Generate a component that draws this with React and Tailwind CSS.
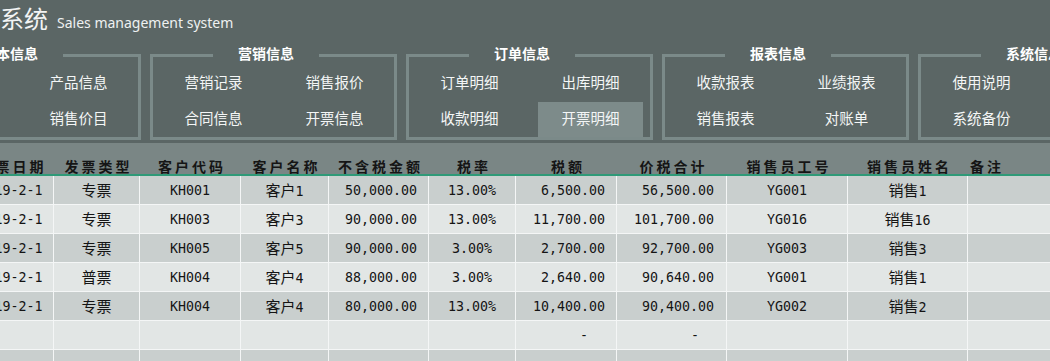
import React from "react";

const groups = [
  { title: "基本信息", items: ["客户信息", "产品信息", "员工信息", "销售价目"] },
  { title: "营销信息", items: ["营销记录", "销售报价", "合同信息", "开票信息"] },
  { title: "订单信息", items: ["订单明细", "出库明细", "收款明细", "开票明细"], active: 3 },
  { title: "报表信息", items: ["收款报表", "业绩报表", "销售报表", "对账单"] },
  { title: "系统信息", items: ["使用说明", "修改密码", "系统备份", "数据恢复"] },
];

const headers = [
  "开票日期", "发票类型", "客户代码", "客户名称", "不含税金额", "税率", "税额", "价税合计", "销售员工号", "销售员姓名", "备注",
];

const rows = [
  ["2019-2-1", "专票", "KH001", "客户1", "50,000.00", "13.00%", "6,500.00", "56,500.00", "YG001", "销售1", ""],
  ["2019-2-1", "专票", "KH003", "客户3", "90,000.00", "13.00%", "11,700.00", "101,700.00", "YG016", "销售16", ""],
  ["2019-2-1", "专票", "KH005", "客户5", "90,000.00", "3.00%", "2,700.00", "92,700.00", "YG003", "销售3", ""],
  ["2019-2-1", "普票", "KH004", "客户4", "88,000.00", "3.00%", "2,640.00", "90,640.00", "YG001", "销售1", ""],
  ["2019-2-1", "专票", "KH004", "客户4", "80,000.00", "13.00%", "10,400.00", "90,400.00", "YG002", "销售2", ""],
  ["", "", "", "", "", "", "-", "-", "", "", ""],
  ["", "", "", "", "", "", "", "", "", "", ""],
];

const cellAlign = [
  "justify-center",
  "justify-center",
  "justify-center",
  "justify-center",
  "justify-end pr-[11px]",
  "justify-center",
  "justify-end pr-[11px]",
  "justify-end pr-[12px]",
  "justify-center",
  "justify-center",
  "justify-start pl-[4px]",
];

const dashAlign = {
  6: "justify-end pr-[28px]",
  7: "justify-end pr-[27px]",
};

const gridCols =
  "grid grid-cols-[86px_86px_101px_88px_100px_87px_101px_110px_121px_120px_200px]";

function Mixed({ text }) {
  const parts = [];
  let buf = "";
  let cjk = null;
  for (const ch of text) {
    const isCjk = /[\u4e00-\u9fff]/.test(ch);
    if (cjk === null) cjk = isCjk;
    if (isCjk !== cjk) {
      parts.push({ t: buf, cjk });
      buf = "";
      cjk = isCjk;
    }
    buf += ch;
  }
  if (buf) parts.push({ t: buf, cjk });
  return (
    <span className="whitespace-nowrap">
      {parts.map((p, i) =>
        p.cjk ? (
          <span key={i} className="text-[15px] font-['Noto_Sans_CJK_SC',sans-serif]">
            {p.t}
          </span>
        ) : (
          <span key={i}>{p.t}</span>
        )
      )}
    </span>
  );
}

function Group({ g }) {
  return (
    <fieldset className="w-[247px] shrink-0 border-[3px] border-[#7b8a89] m-0 p-0 min-w-0">
      <legend className="ml-[60px] p-0 text-left">
        <div className="w-[106px] text-center text-[14px] leading-[20px] pb-[4px] font-bold text-white whitespace-nowrap">
          {g.title}
        </div>
      </legend>
      <div className="grid grid-cols-[105px_105px] gap-x-[16px] gap-y-[1px] pl-[8px] mt-[-1px]">
        {g.items.map((it, i) => (
          <div
            key={i}
            className={`h-[35px] flex items-center justify-center pb-[3px] text-[14.5px] text-[#f4f6f6] whitespace-nowrap ${
              g.active === i ? "bg-[#7d8b8a]" : ""
            }`}
          >
            {it}
          </div>
        ))}
      </div>
    </fieldset>
  );
}

export default function App() {
  return (
    <div className="w-[1050px] h-[361px] overflow-hidden bg-[#5b6665] font-['Noto_Sans_CJK_SC','Noto_Sans',sans-serif]">
      {/* title bar */}
      <div className="h-[43px] flex items-baseline pt-[2px] whitespace-nowrap">
        <span className="ml-[-96px] text-[24px] leading-[32px] text-[#f2f4f4]">销售管理系统</span>
        <span className="ml-[9px] text-[14px] text-[#eef1f1] font-['Noto_Sans','Noto_Sans_CJK_SC',sans-serif]">
          Sales management system
        </span>
      </div>

      {/* groups */}
      <div className="flex gap-[9px] ml-[-106px]">
        {groups.map((g, i) => (
          <Group key={i} g={g} />
        ))}
      </div>

      {/* table header */}
      <div className="mt-[3px] h-[33px] bg-[#7a8685] border-b-2 border-[#2f9a78] overflow-hidden">
        <div className={`${gridCols} ml-[-32px] h-[31px]`}>
          {headers.map((h, i) => (
            <div
              key={i}
              className={`flex items-end pb-[1px] text-[14px] leading-[14px] font-bold tracking-[3px] text-[#151515] whitespace-nowrap ${
                i === 10 ? "justify-start pl-[2px]" : "justify-center pl-[3px]"
              }`}
            >
              {h}
            </div>
          ))}
        </div>
      </div>

      {/* table rows */}
      <div className="overflow-hidden">
        <div className="ml-[-32px] font-['DejaVu_Sans_Mono','Noto_Sans_CJK_SC',monospace] text-[13.3px] text-[#141414]">
          {rows.map((r, ri) => (
            <div
              key={ri}
              className={`${gridCols} h-[29px] border-b border-[#f4f6f6] ${
                ri % 2 === 0 ? "bg-[#c9cfce]" : "bg-[#e2e6e5]"
              }`}
            >
              {r.map((c, ci) => (
                <div
                  key={ci}
                  className={`flex items-center pt-[1px] border-r border-[#f4f6f6] ${
                    c === "-" ? dashAlign[ci] : cellAlign[ci]
                  }`}
                >
                  <Mixed text={c} />
                </div>
              ))}
            </div>
          ))}
        </div>
      </div>
    </div>
  );
}
